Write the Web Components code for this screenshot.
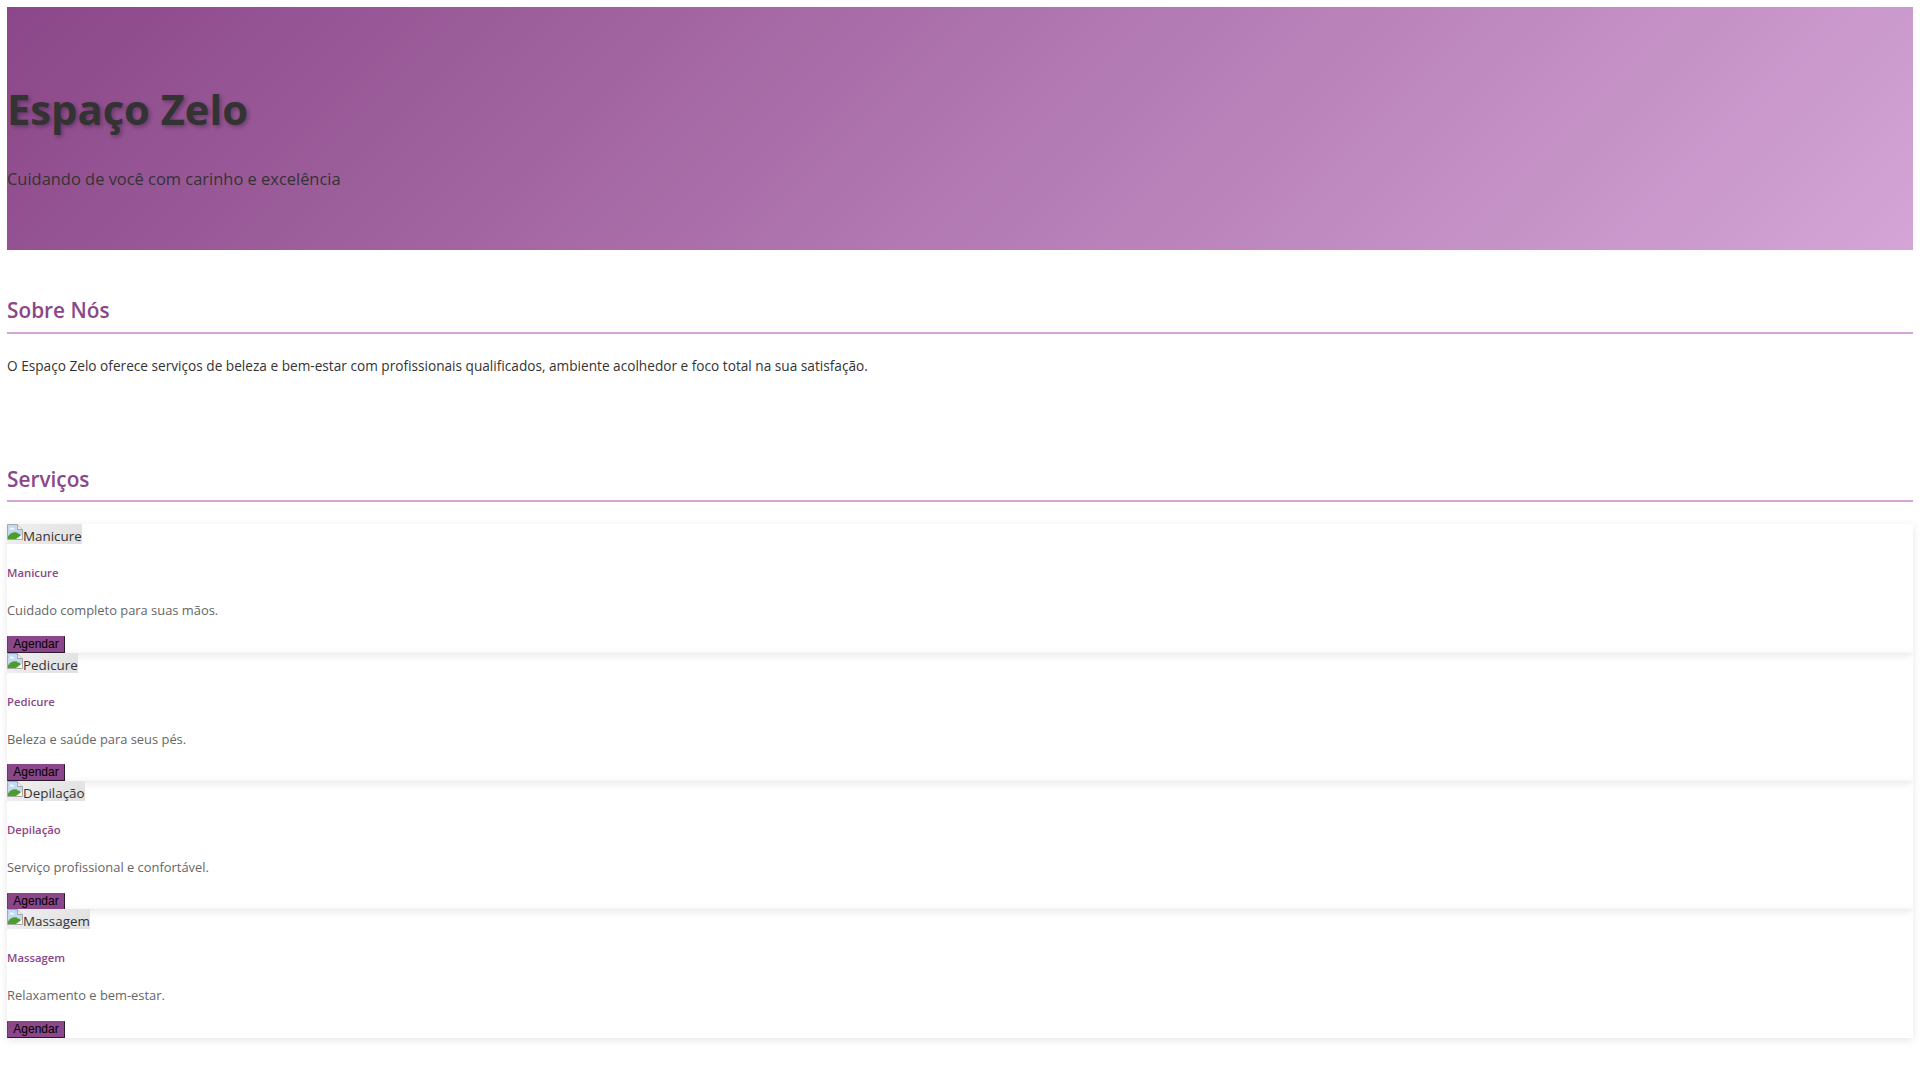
<!DOCTYPE html>
<html lang="pt"><head><meta charset="utf-8"><title>Espaço Zelo</title>
<style>
html,body{margin:0;padding:0;background:#fff}
body{padding:7px 7px 0;font-family:"Open Sans","Noto Sans",sans-serif;color:#333;height:1080px;box-sizing:border-box;overflow:hidden}
</style></head><body>
<zelo-header title-text="Espaço Zelo" tagline="Cuidando de você com carinho e excelência"></zelo-header>
<zelo-section heading="Sobre Nós" style="--after:21.5px"><p>O Espaço Zelo oferece serviços de beleza e bem-estar com profissionais qualificados, ambiente acolhedor e foco total na sua satisfação.</p></zelo-section>
<zelo-section heading="Serviços" style="--after:22.3px">
<zelo-card name="Manicure" desc="Cuidado completo para suas mãos."></zelo-card>
<zelo-card name="Pedicure" desc="Beleza e saúde para seus pés."></zelo-card>
<zelo-card name="Depilação" desc="Serviço profissional e confortável."></zelo-card>
<zelo-card name="Massagem" desc="Relaxamento e bem-estar."></zelo-card>
</zelo-section>
<script>
const esc=s=>String(s).replace(/&/g,'&amp;').replace(/</g,'&lt;');
customElements.define('zelo-header',class extends HTMLElement{connectedCallback(){
this.attachShadow({mode:'open'}).innerHTML=`<style>
:host{display:flex;flex-direction:column;height:243px;box-sizing:border-box;background:linear-gradient(135deg,#8b4789,#d4a5d6);color:#333}
h1{margin:80px 0 0;font-size:41.7px;line-height:44px;font-weight:700;text-shadow:2px 2px 4px rgba(0,0,0,.3)}
p{margin:36px 0 0;font-size:16.45px;line-height:24px;color:#333}
</style><h1>${esc(this.getAttribute('title-text'))}</h1><p>${esc(this.getAttribute('tagline'))}</p>`}});
customElements.define('zelo-section',class extends HTMLElement{connectedCallback(){
this.attachShadow({mode:'open'}).innerHTML=`<style>
:host{display:block;padding-top:44px}
h2{margin:0;font-size:20.8px;line-height:32px;font-weight:600;color:#8b4789;border-bottom:2px solid #d4a5d6;padding-bottom:5.5px;margin-bottom:var(--after,19px)}
::slotted(p){margin:0;font-size:13.65px;line-height:21px;color:#333;padding-bottom:42.5px}
</style><h2>${esc(this.getAttribute('heading'))}</h2><slot></slot>`}});
customElements.define('zelo-card',class extends HTMLElement{connectedCallback(){
const n=esc(this.getAttribute('name'));
this.attachShadow({mode:'open'}).innerHTML=`<style>
:host{display:block;height:128.4px;box-sizing:border-box;box-shadow:0 2px 8px rgba(0,0,0,.1)}
.img{display:flex;width:max-content;align-items:flex-start;height:20px;background:linear-gradient(135deg,#f0f0f0,#e0e0e0);font-size:13.4px;line-height:25px;color:#333;white-space:nowrap}
.img svg{flex:none;display:block}
h3{margin:19px 0 0;font-size:11.3px;line-height:19px;font-weight:600;color:#8b4789}
p{margin:19px 0 0;font-size:12.9px;line-height:19px;color:#666}
button{display:block;margin:15.5px 0 0;padding:0 5px;width:58px;height:17px;box-sizing:border-box;border:1px solid;border-color:#8b4789 #2e1a2e #2e1a2e #6d386c;background:#8b4789;color:#000;font:12px/15px "Liberation Sans",Arial,sans-serif;border-radius:0}
</style><div class="img"><svg width="16" height="16" viewBox="0 0 16 16"><path d="M.5 15.5V.5H10.5L15.5 5.5V15.5Z" fill="#fff" stroke="#a8a8a8"/><path d="M10.5.5V5.5H15.5" fill="#eee" stroke="#a8a8a8"/><path d="M1 1H10V6H15V11H1Z" fill="#c3d8f2"/><path d="M3 4.5a1.5 1 0 0 1 3 0a1 1 0 0 1 1.5 1H2.5a1 1 0 0 1 .5-1Z" fill="#fff"/><path d="M1 15V12C3.5 9 6.5 7.5 9.5 8.5C11.5 9.2 13.5 10.5 15 12V12.5L12 15Z" fill="#4f9c2e"/><path d="M9 15L15 10.5V15Z" fill="#fff"/></svg><span>${n}</span></div><h3>${n}</h3><p>${esc(this.getAttribute('desc'))}</p><button>Agendar</button>`}});
</script></body></html>
